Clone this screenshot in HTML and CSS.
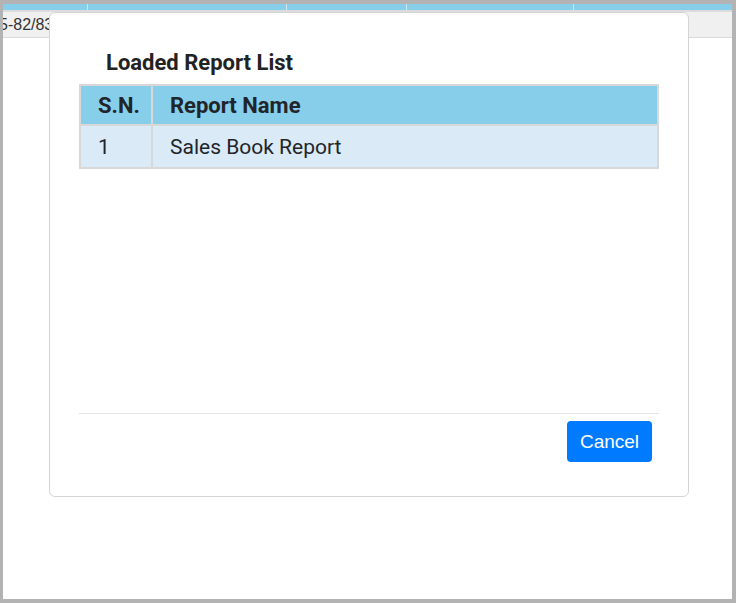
FILE: index.html
```html
<!DOCTYPE html>
<html lang="en">
<head>
    <meta charset="UTF-8">
    <meta name="viewport" content="width=device-width, initial-scale=1.0">
    <title>Loaded Report List</title>
    <link rel="stylesheet" href="styles.css">
</head>
<body>
    <div class="page-frame">
        <div class="top-strip">
            <span class="strip-cell c1"></span>
            <span class="strip-cell c2"></span>
            <span class="strip-cell c3"></span>
            <span class="strip-cell c4"></span>
            <span class="strip-cell c5"></span>
        </div>
        <div class="toolbar-row">
            <span class="toolbar-text">5-82/83</span>
        </div>
        <div class="page-body"></div>

        <!-- report list modal -->
        <div class="modal-box">
            <h2 class="modal-title">Loaded Report List</h2>
            <table class="report-table">
                <thead>
                    <tr>
                        <th class="col-sn">S.N.</th>
                        <th>Report Name</th>
                    </tr>
                </thead>
                <tbody>
                    <tr>
                        <td class="col-sn">1</td>
                        <td>Sales Book Report</td>
                    </tr>
                </tbody>
            </table>
            <div class="modal-footer">
                <button id="cancel-btn">Cancel</button>
            </div>
        </div>
    </div>
</body>
</html>
```

FILE: styles.css
```css
body {
    margin: 0;
    font-family: Roboto, "Liberation Sans", sans-serif;
    color: #212529;
    background-color: #fff;
}
.page-frame {
    position: relative;
    width: 736px;
    height: 603px;
    box-sizing: border-box;
    border: 4px solid #b3b3b3;
    border-left-width: 3px;
    display: flex;
    flex-direction: column;
    overflow: hidden;
}
.top-strip {
    display: flex;
    height: 6px;
    background-color: #87ceeb;
    border-bottom: 2px solid #dcdcdc;
}
.strip-cell {
    border-right: 1px solid #cfe3ea;
}
.c1 { width: 84px; }
.c2 { width: 198px; }
.c3 { width: 119px; }
.c4 { width: 166px; }
.c5 { flex: 1; border-right: none; }
.toolbar-row {
    height: 25px;
    background-color: #f0f0f0;
    border-bottom: 1px solid #dadada;
    display: flex;
    align-items: center;
}
.toolbar-text {
    font-family: "Liberation Sans", Arial, sans-serif;
    font-size: 16px;
    color: #333;
    margin-left: -4px;
}
.page-body {
    flex: 1;
}
.modal-box {
    position: absolute;
    left: 46px;
    top: 8px;
    width: 640px;
    height: 485px;
    box-sizing: border-box;
    background: white;
    border: 1px solid #d4d4d4;
    border-radius: 6px;
    padding: 0 29px;
    display: flex;
    flex-direction: column;
}
.modal-title {
    margin: 37px 0 0 27px;
    font-size: 22px;
    font-weight: bold;
    line-height: 26px;
    color: #222;
}
.report-table {
    width: 100%;
    border-collapse: collapse;
    margin-top: 8px;
    border: 2px solid #d8d8d8;
}
.report-table th,
.report-table td {
    border: 2px solid #d8d8d8;
    text-align: left;
    padding: 0 17px;
    font-size: 21px;
}
.report-table th {
    background-color: #87ceeb;
    font-weight: bold;
    font-size: 22px;
    height: 38px;
}
.report-table td {
    background-color: #dbeaf7;
    height: 41px;
}
.report-table .col-sn {
    width: 42px;
    padding-right: 11px;
}
.modal-footer {
    margin-top: auto;
    margin-bottom: 34px;
    border-top: 1px solid #e3e3e3;
    padding: 7px 7px 0 0;
    display: flex;
    justify-content: flex-end;
}
button {
    font-family: "Liberation Sans", Arial, sans-serif;
    font-size: 19px;
    color: white;
    background-color: #007bff;
    border: none;
    border-radius: 4px;
    width: 85px;
    height: 41px;
    cursor: pointer;
}
button:hover {
    background-color: #0069d9;
}
```
